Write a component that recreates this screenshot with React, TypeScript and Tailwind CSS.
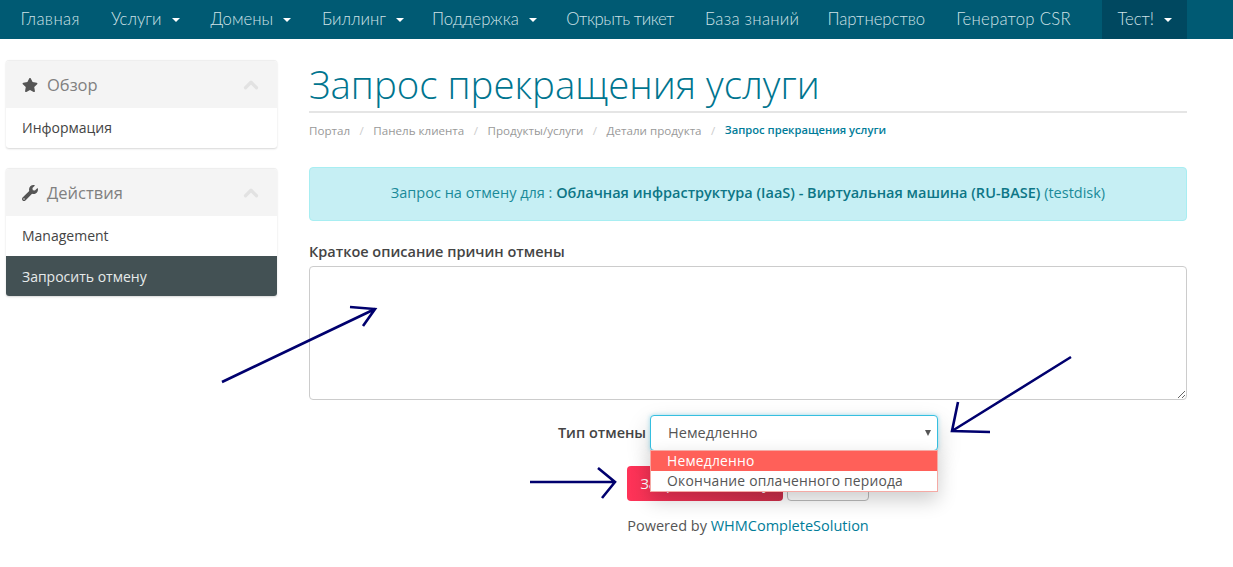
import { ChevronUp } from "lucide-react";
import { FaStar, FaWrench } from "react-icons/fa";

const body = "font-['Open_Sans','Noto_Sans',sans-serif]";

function Caret() {
  return <span className="inline-block ml-[10px] align-middle w-0 h-0 border-x-[4px] border-x-transparent border-t-[4px] border-t-white" />;
}

const navItems: [string, boolean, string][] = [
  ["Главная", false, "tracking-[0.4px]"],
  ["Услуги", true, ""],
  ["Домены", true, ""],
  ["Биллинг", true, "pr-[12.5px]"],
  ["Поддержка", true, "pr-[14px]"],
  ["Открыть тикет", false, "tracking-[-0.45px]"],
  ["База знаний", false, "tracking-[0.3px] pr-[12.5px]"],
  ["Партнерство", false, ""],
  ["Генератор CSR", false, "tracking-[0.3px]"],
];

function Panel({ icon, title, children }: { icon: React.ReactNode; title: string; children: React.ReactNode }) {
  return (
    <div className="rounded-[3px] border-t border-[#eeeeee] shadow-[0_1px_2px_rgba(0,0,0,0.16)] overflow-hidden bg-white">
      <div className="h-[47px] pt-[1px] bg-[#f4f4f4] flex items-center pl-[16px] pr-[15px] text-[#808080]">
        <span className="w-[17px] text-[#555555] text-[16px] flex items-center">{icon}</span>
        <span className="ml-[8px] text-[16.5px] leading-none">{title}</span>
        <ChevronUp className="ml-auto text-[#e2e2e2]" size={22} strokeWidth={3.5} />
      </div>
      {children}
    </div>
  );
}

export default function App() {
  return (
    <div className={`relative w-[1233px] h-[567px] overflow-hidden bg-white ${body}`}>
      <nav className="h-[39px] bg-[#005a73] flex items-center pl-[5px] text-[16.7px] text-[#cfe2e7] font-['Lato',sans-serif] font-light whitespace-nowrap">
        {navItems.map(([label, caret, extra]) => (
          <a key={label} className={`px-[15.5px] h-full flex items-center ${extra}`}>
            {label}
            {caret && <Caret />}
          </a>
        ))}
        <a className="ml-[16px] px-[15px] h-full w-[85px] flex items-center bg-[#004860]">
          Тест!
          <Caret />
        </a>
      </nav>

      <div className="flex pl-[6px] pr-[46px]">
        <aside className="w-[271px] pt-[21px] flex flex-col gap-[20px] shrink-0">
          <Panel icon={<FaStar />} title="Обзор">
            <div className="h-[40px] pb-[2px] flex items-center px-[16px] text-[14px] text-[#444444]">Информация</div>
          </Panel>
          <Panel icon={<FaWrench />} title="Действия">
            <div className="h-[40px] pb-[1px] flex items-center px-[16px] text-[14px] text-[#444444]">Management</div>
            <div className="h-[40px] flex items-center px-[16px] text-[14px] text-[#e6eaea] bg-[#435154]">Запросить отмену</div>
          </Panel>
        </aside>

        <main className="ml-[32px] w-[878px]">
          <div className="h-[74px] border-b-2 border-[#e5e5e5] flex items-end">
            <h1 className="text-[38.4px] leading-[52px] pb-[1px] font-light text-[#00758f] font-['Open_Sans',sans-serif] whitespace-nowrap">
              Запрос прекращения услуги
            </h1>
          </div>
          <div className="h-[35px] flex items-center text-[11.6px] text-[#999999] whitespace-nowrap">
            <span>Портал</span>
            <span className="mx-[9.5px] text-[#cccccc]">/</span>
            <span>Панель клиента</span>
            <span className="mx-[9.5px] text-[#cccccc]">/</span>
            <span>Продукты/услуги</span>
            <span className="mx-[9.5px] text-[#cccccc]">/</span>
            <span>Детали продукта</span>
            <span className="mx-[9.5px] text-[#cccccc]">/</span>
            <span className="text-[11.2px] text-[#007c99] font-semibold">Запрос прекращения услуги</span>
          </div>

          <div className="mt-[19px] h-[54px] pb-[2px] rounded-[4px] border border-[#a8eef2] bg-[#c6eff4] flex items-center justify-center text-[14.5px] text-[#1a8a99] whitespace-nowrap">
            <span>
              Запрос на отмену для : <b className="font-semibold text-[#0d7686]">Облачная инфраструктура (IaaS) - Виртуальная машина (RU-BASE)</b> (testdisk)
            </span>
          </div>

          <label className="block mt-[21px] h-[20px] leading-[20px] text-[14.5px] font-semibold text-[#444444]">
            Краткое описание причин отмены
          </label>
          <textarea className="block mt-[4px] w-full h-[134px] rounded-[4px] border border-[#cccccc] bg-white" />

          <div className="mt-[15px] flex justify-center items-center">
            <span className="text-[14.5px] pb-[1px] font-semibold text-[#444444] mr-[4px]">Тип отмены</span>
            <div className="relative w-[288px] h-[36px] rounded-[4px] border border-[#35bfe0] shadow-[0_0_4px_rgba(70,190,225,0.5),0_10px_25px_rgba(0,0,0,0.18)] bg-white flex items-center pl-[17px] text-[14.5px] text-[#555555]">
              Немедленно
              <span className="absolute right-[6px] top-[14px] w-0 h-0 border-x-[3px] border-x-transparent border-t-[6px] border-t-[#555555]" />
              <div className="absolute left-[-1px] top-[34px] w-[288px] border border-[#f5aaa5] bg-white text-[13.85px] leading-[20px] z-10 shadow-[0_8px_20px_rgba(0,0,0,0.2)] tracking-[0.2px]">
                <div className="bg-[#ff6059] text-white pl-[16px]">Немедленно</div>
                <div className="pl-[16px] text-[#555555]">Окончание оплаченного периода</div>
              </div>
            </div>
          </div>

          <div className="mt-[15px] flex justify-center gap-[4px]">
            <button className="w-[156px] h-[35px] rounded-[4px] bg-gradient-to-r from-[#ff3358] to-[#cc2f4a] text-white text-[14.5px]">
              Запросить отмену
            </button>
            <button className="w-[82px] h-[35px] rounded-[4px] border border-[#bbbbbb] bg-white text-[14.5px] text-[#555555]">
              Отмена
            </button>
          </div>

          <p className="mt-[15px] text-center text-[14.5px] leading-[20px] text-[#555555]">
            Powered by <a className="text-[#007c99]">WHMCompleteSolution</a>
          </p>
        </main>
      </div>

      <svg className="absolute inset-0 z-20 pointer-events-none" width="1233" height="567" fill="none" stroke="#00006e" strokeWidth="2.6">
        <path d="M222 382 L375 309 M350 307 L375 309 L363 326" />
        <path d="M1071 357 L952 431 M958 402 L952 431 L990 432" />
        <path d="M530 482 L614 482 M598 468 L615 482 L602 498" />
      </svg>
    </div>
  );
}
